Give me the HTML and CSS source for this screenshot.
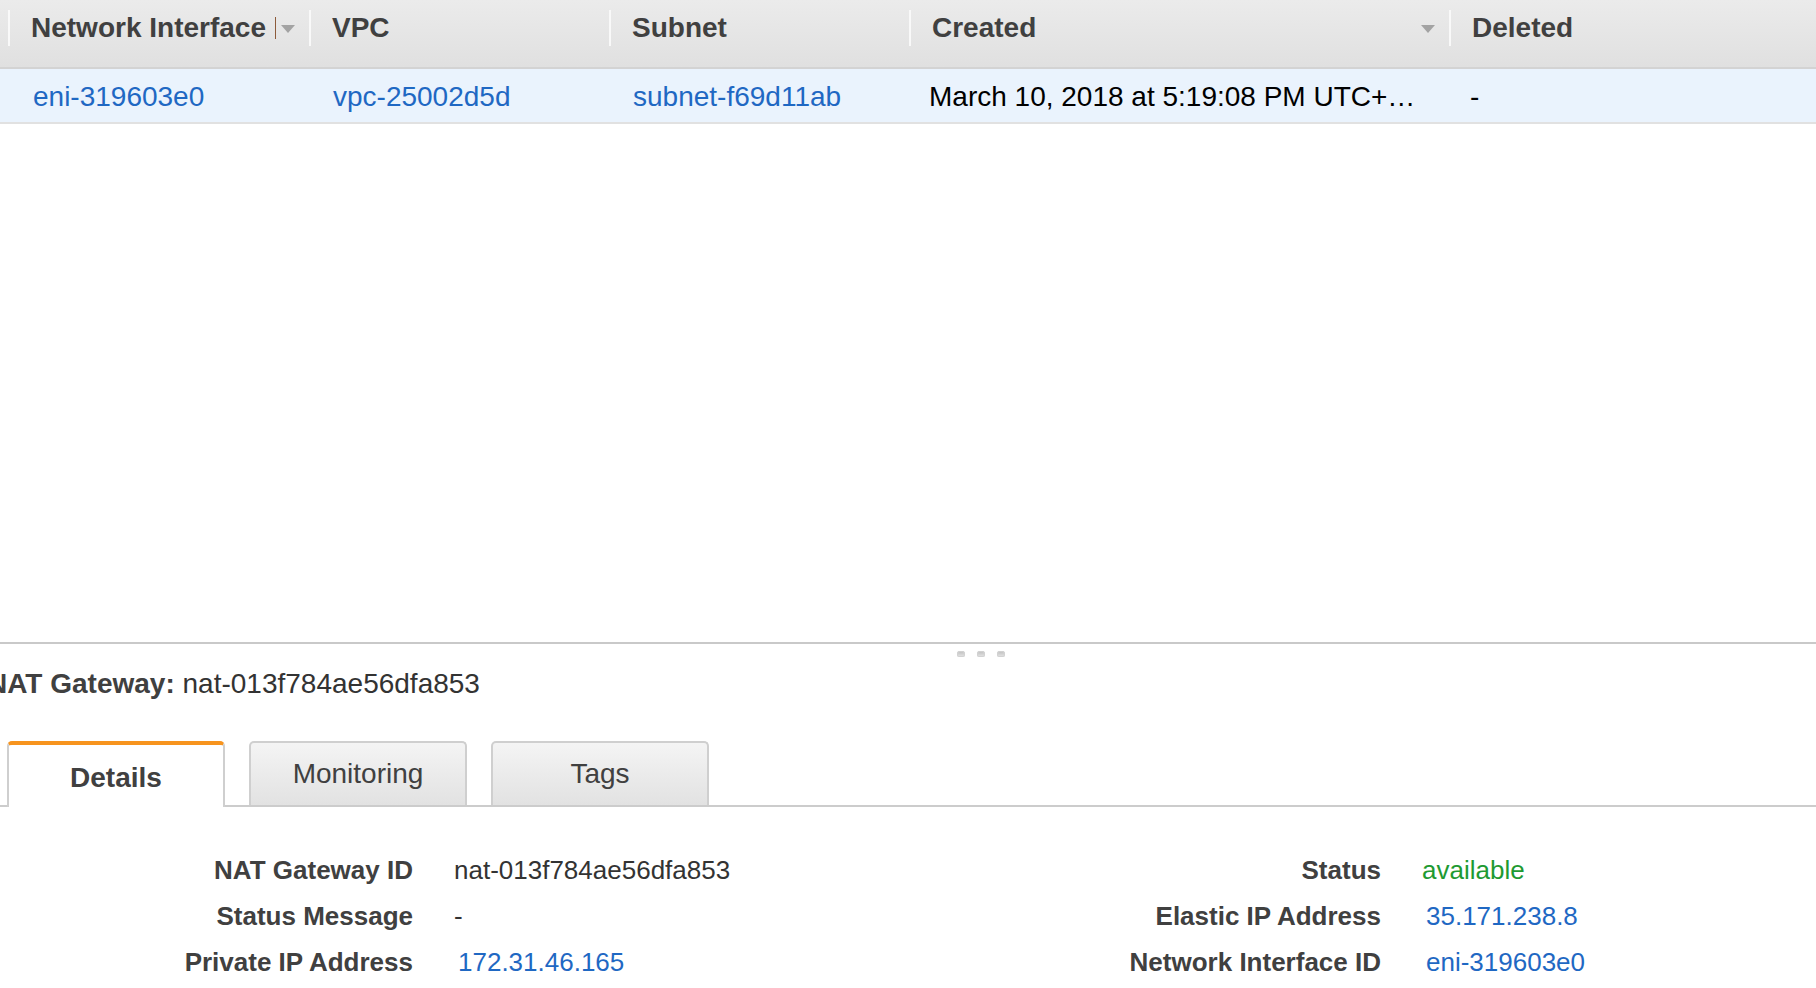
FILE: index.html
```html
<!DOCTYPE html>
<html>
<head>
<meta charset="utf-8">
<title>NAT Gateway</title>
<link rel="stylesheet" href="styles.css">
</head>
<body>
<div class="page">
  <section class="table-area">
    <div class="grid-header">
      <div class="hcol"><div class="hcell"><span>Network Interface</span><span class="sorter"><span class="bar"></span><span class="tri"></span></span></div></div>
      <div class="hcol"><div class="hcell"><span>VPC</span></div></div>
      <div class="hcol"><div class="hcell"><span>Subnet</span></div></div>
      <div class="hcol"><div class="hcell"><span>Created</span><span class="sorter"><span class="tri"></span></span></div></div>
      <div class="hcol"><div class="hcell"><span>Deleted</span></div></div>
    </div>
    <div class="grid-row">
      <div class="cell"><a class="link">eni-319603e0</a></div>
      <div class="cell"><a class="link">vpc-25002d5d</a></div>
      <div class="cell"><a class="link">subnet-f69d11ab</a></div>
      <div class="cell plain">March 10, 2018 at 5:19:08 PM UTC+…</div>
      <div class="cell plain">-</div>
    </div>
  </section>

  <section class="detail-pane">
    <div class="handle"><span class="dot"></span><span class="dot"></span><span class="dot"></span></div>
    <div class="title"><b>NAT Gateway:</b> nat-013f784ae56dfa853</div>
    <div class="tabs">
      <div class="tab active">Details</div>
      <div class="tab">Monitoring</div>
      <div class="tab">Tags</div>
    </div>
    <div class="details">
      <div class="kv left">
        <div class="k">NAT Gateway ID</div><div class="v">nat-013f784ae56dfa853</div>
        <div class="k">Status Message</div><div class="v">-</div>
        <div class="k">Private IP Address</div><div class="v"><a class="link ind">172.31.46.165</a></div>
      </div>
      <div class="kv right">
        <div class="k">Status</div><div class="v green">available</div>
        <div class="k">Elastic IP Address</div><div class="v"><a class="link ind">35.171.238.8</a></div>
        <div class="k">Network Interface ID</div><div class="v"><a class="link ind">eni-319603e0</a></div>
      </div>
    </div>
  </section>
</div>
</body>
</html>
```

FILE: styles.css
```css
html, body {
  margin: 0;
  padding: 0;
  background: #ffffff;
}
body {
  font-family: "Liberation Sans", Arial, sans-serif;
  width: 1816px;
  height: 988px;
  overflow: hidden;
}
.page {
  display: flex;
  flex-direction: column;
}
.table-area {
  height: 642px;
  display: flex;
  flex-direction: column;
}
.grid-header {
  height: 69px;
  box-sizing: border-box;
  display: grid;
  grid-template-columns: 301px 300px 300px 540px 1fr;
  padding-left: 8px;
  background: linear-gradient(#ebebeb, #e0e0e0);
  border-bottom: 2px solid #d3d3d3;
}
.hcol {
  padding-top: 10px;
}
.hcell {
  height: 36px;
  border-left: 2px solid #f9f9f9;
  display: flex;
  align-items: center;
  padding-left: 21px;
  padding-right: 14px;
  font-size: 28px;
  font-weight: bold;
  color: #404040;
}
.sorter {
  margin-left: auto;
  display: flex;
  align-items: center;
  gap: 5px;
}
.bar {
  width: 1px;
  height: 22px;
  background: #8d5b3a;
}
.tri {
  width: 0;
  height: 0;
  border-left: 7px solid transparent;
  border-right: 7px solid transparent;
  border-top: 8px solid #a3a3a3;
  margin-top: 2px;
}
.grid-row {
  height: 55px;
  box-sizing: border-box;
  display: grid;
  grid-template-columns: 301px 300px 300px 540px 1fr;
  padding-left: 8px;
  padding-top: 2px;
  background: #eaf3fd;
  border-bottom: 2px solid #e1e1e1;
  align-items: center;
}
.cell {
  font-size: 28px;
  padding-left: 25px;
  white-space: nowrap;
}
.cell:nth-child(2), .cell:nth-child(3) { padding-left: 24px; }
.cell:nth-child(4) { padding-left: 20px; }
.cell:nth-child(5) { padding-left: 21px; }
.plain { color: #000; }
.link {
  color: #1f68c3;
  text-decoration: none;
}
.detail-pane {
  border-top: 2px solid #c9c9c9;
  display: flex;
  flex-direction: column;
}
.handle {
  height: 20px;
  display: flex;
  gap: 12px;
  padding-left: 957px;
  padding-top: 7px;
  box-sizing: border-box;
}
.dot {
  width: 8px;
  height: 6px;
  border-radius: 3px 3px 2px 2px;
  background: linear-gradient(#bdbdbd, #e6e6e6);
  box-shadow: inset 0 0 0 1px #d2d2d2;
}
.title {
  height: 40px;
  line-height: 40px;
  margin-left: -13px;
  font-size: 28px;
  color: #333;
  white-space: nowrap;
}
.title b {
  color: #404040;
}
.tabs {
  margin-top: 37px;
  display: flex;
  gap: 24px;
  padding-left: 7px;
  border-bottom: 2px solid #cccccc;
  height: 64px;
}
.tab {
  width: 218px;
  box-sizing: border-box;
  height: 64px;
  border: 2px solid #cfcfcf;
  border-bottom: none;
  border-radius: 5px 5px 0 0;
  background: linear-gradient(#f4f4f4, #e2e2e2);
  display: flex;
  align-items: center;
  justify-content: center;
  font-size: 28px;
  color: #404040;
}
.tab.active {
  border-top: 4px solid #f7941e;
  background: #ffffff;
  font-weight: bold;
  height: 66px;
  padding-top: 4px;
}
.details {
  display: flex;
  padding-top: 40px;
}
.kv {
  display: grid;
  column-gap: 41px;
  grid-auto-rows: 46px;
  align-items: center;
  font-size: 26px;
}
.kv.left {
  width: 910px;
  grid-template-columns: 413px 1fr;
}
.kv.right {
  flex: 1;
  grid-template-columns: 471px 1fr;
}
.k {
  text-align: right;
  font-weight: bold;
  color: #404040;
  white-space: nowrap;
}
.v {
  color: #333;
  white-space: nowrap;
}
.ind {
  padding-left: 4px;
}
.green {
  color: #1e9a32;
}
```
